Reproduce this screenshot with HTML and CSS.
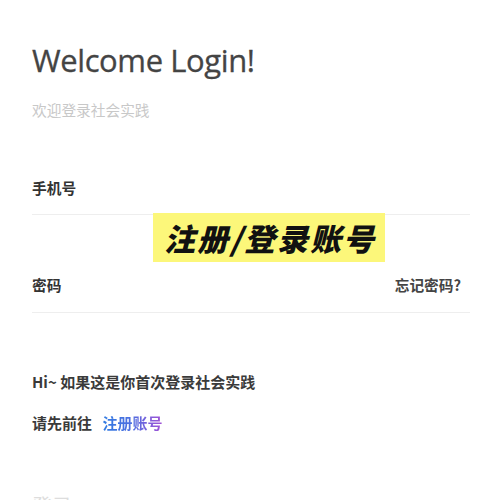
FILE: index.html
```html
<!DOCTYPE html>
<html lang="zh">
<head>
<meta charset="utf-8">
<link rel="stylesheet" href="styles.css">
</head>
<body>
<div class="page">
  <h1 class="title">Welcome Login!</h1>
  <p class="subtitle">欢迎登录社会实践</p>
  <div class="field">
    <div class="field-label"><span>手机号</span></div>
  </div>
  <div class="field">
    <div class="field-label"><span>密码</span><span class="forgot">忘记密码?</span></div>
  </div>
  <p class="hint">Hi~ 如果这是你首次登录社会实践</p>
  <p class="hint">请先前往 <a class="reg-link">注册账号</a></p>
  <div class="login-btn">登录</div>
  <div class="banner">注册/登录账号</div>
</div>
</body>
</html>
```
FILE: styles.css
```css
html, body {
  margin: 0;
  padding: 0;
  background: #fff;
}
.page {
  position: relative;
  padding: 0 30px 0 32px;
  font-family: "Noto Sans CJK SC", "Noto Sans", sans-serif;
  color: #333;
  height: 500px;
  overflow: hidden;
}
.title {
  margin: 0;
  padding-top: 38px;
  font-family: "Open Sans", "Noto Sans CJK SC", sans-serif;
  font-weight: 400;
  font-size: 31px;
  line-height: 44px;
  color: #444;
  letter-spacing: -0.4px;
  -webkit-text-stroke: 0.3px #444;
}
.subtitle {
  margin: 18px 0 0;
  font-size: 14.7px;
  line-height: 20px;
  color: #c8c8c8;
}
.field {
  border-bottom: 1px solid #eee;
}
.field:first-of-type {
  margin-top: 58px;
}
.field-label {
  display: flex;
  justify-content: space-between;
  font-size: 14.7px;
  font-weight: 700;
  line-height: 20px;
  height: 20px;
  padding-bottom: 16px;
  padding-right: 9px;
}
.field + .field {
  margin-top: 60px;
}
.field + .field .field-label {
  padding-bottom: 17px;
}
.forgot {
  color: #444;
}
.hint {
  margin: 59px 0 0;
  font-size: 15px;
  font-weight: 700;
  line-height: 20px;
  color: #3a3a3a;
}
.hint + .hint {
  margin-top: 21px;
}
.reg-link {
  margin-left: 7px;
  background: linear-gradient(90deg, #2f7be2 0%, #4f6fe0 50%, #a152d6 100%);
  -webkit-background-clip: text;
  background-clip: text;
  color: transparent;
}
.login-btn {
  margin-top: 59px;
  font-size: 20px;
  line-height: 28px;
  color: #ddd;
}
.banner {
  position: absolute;
  left: 153px;
  top: 213px;
  width: 232px;
  height: 49px;
  background: #fcf77a;
  color: #111;
  font-size: 31px;
  font-weight: 900;
  font-style: italic;
  line-height: 49px;
  text-align: center;
  letter-spacing: 2px;
  text-indent: 2px;
}
```
